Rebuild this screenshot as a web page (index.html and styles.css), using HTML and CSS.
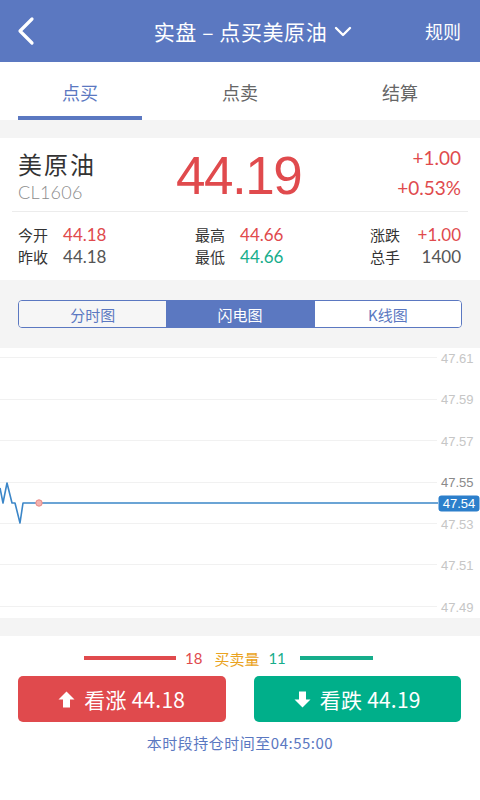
FILE: index.html
```html
<!DOCTYPE html>
<html lang="zh-CN">
<head>
<meta charset="utf-8">
<title>实盘 – 点买美原油</title>
<link rel="stylesheet" href="styles.css">
</head>
<body>
<div class="page">
  <header class="header">
    <svg class="back" width="20" height="30" viewBox="0 0 20 30"><polyline points="15,3 3,15 15,27" fill="none" stroke="#fff" stroke-width="3.2" stroke-linecap="round" stroke-linejoin="round"/></svg>
    <div class="title">实盘 – 点买美原油
      <svg class="caret" width="18" height="12" viewBox="0 0 18 12"><polyline points="2,3 9,10 16,3" fill="none" stroke="#fff" stroke-width="2.4" stroke-linecap="round" stroke-linejoin="round"/></svg>
    </div>
    <div class="rule">规则</div>
  </header>

  <nav class="tabs">
    <div class="tab active">点买</div>
    <div class="tab">点卖</div>
    <div class="tab">结算</div>
  </nav>

  <div class="gap"></div>

  <section class="quote">
    <div class="quote-top">
      <div class="name">
        <div class="cn">美原油</div>
        <div class="code">CL1606</div>
      </div>
      <div class="price">44.19</div>
      <div class="change">
        <div>+1.00</div>
        <div>+0.53%</div>
      </div>
    </div>
    <div class="stats">
      <div class="col">
        <div class="row"><span class="lbl">今开</span><span class="val red">44.18</span></div>
        <div class="row"><span class="lbl">昨收</span><span class="val">44.18</span></div>
      </div>
      <div class="col">
        <div class="row"><span class="lbl">最高</span><span class="val red">44.66</span></div>
        <div class="row"><span class="lbl">最低</span><span class="val green">44.66</span></div>
      </div>
      <div class="col col3">
        <div class="row"><span class="lbl">涨跌</span><span class="val red">+1.00</span></div>
        <div class="row"><span class="lbl">总手</span><span class="val">1400</span></div>
      </div>
    </div>
  </section>

  <div class="seg-wrap">
    <div class="seg">
      <div class="seg-item left">分时图</div>
      <div class="seg-item on">闪电图</div>
      <div class="seg-item right">K线图</div>
    </div>
  </div>

  <section class="chart">
    <svg width="480" height="270" viewBox="0 0 480 270">
      <g stroke="#f1f1f1" stroke-width="1">
        <line x1="0" y1="9.5" x2="437" y2="9.5"/>
        <line x1="0" y1="51.5" x2="437" y2="51.5"/>
        <line x1="0" y1="92.5" x2="437" y2="92.5"/>
        <line x1="0" y1="134.5" x2="437" y2="134.5"/>
        <line x1="0" y1="175.5" x2="437" y2="175.5"/>
        <line x1="0" y1="216.5" x2="437" y2="216.5"/>
        <line x1="0" y1="258.5" x2="437" y2="258.5"/>
      </g>
      <g class="axis" font-family="Liberation Sans, Arial, sans-serif" font-size="13" fill="#c6c6c6">
        <text x="441" y="15">47.61</text>
        <text x="441" y="56">47.59</text>
        <text x="441" y="98">47.57</text>
        <text x="441" y="139" fill="#8a8a8a">47.55</text>
        <text x="441" y="181">47.53</text>
        <text x="441" y="222">47.51</text>
        <text x="441" y="264">47.49</text>
      </g>
      <polyline points="0,140 3,155 7,135 12,155 15,155 20,175 23,155 438,155" fill="none" stroke="#3b86c8" stroke-width="1.6" stroke-linejoin="round"/>
      <circle cx="39" cy="155" r="3.2" fill="#f3b3b0" stroke="#e98a86" stroke-width="1"/>
      <rect x="438.5" y="147.5" width="41" height="16" rx="3" fill="#2c7fcb"/>
      <text x="459" y="160" text-anchor="middle" font-family="Liberation Sans, Arial, sans-serif" font-size="13" fill="#fff">47.54</text>
    </svg>
  </section>

  <div class="gap"></div>

  <section class="bottom">
    <div class="volume">
      <span class="bar red-bar"></span>
      <span class="vnum red">18</span>
      <span class="vlbl">买卖量</span>
      <span class="vnum green">11</span>
      <span class="bar green-bar"></span>
    </div>
    <div class="actions">
      <button class="btn up">
        <svg width="17" height="17" viewBox="0 0 17 17"><polygon points="8.5,0.5 16.5,8.5 12,8.5 12,16.5 5,16.5 5,8.5 0.5,8.5" fill="#fff"/></svg>
        <span>看涨 44.18</span>
      </button>
      <button class="btn down">
        <svg width="17" height="17" viewBox="0 0 17 17"><polygon points="5,0.5 12,0.5 12,8.5 16.5,8.5 8.5,16.5 0.5,8.5 5,8.5" fill="#fff"/></svg>
        <span>看跌 44.19</span>
      </button>
    </div>
    <div class="note">本时段持仓时间至04:55:00</div>
  </section>
</div>
</body>
</html>
```

FILE: styles.css
```css
* { box-sizing: border-box; }

html, body {
  margin: 0;
  padding: 0;
  background: #fff;
}

body {
  font-family: "Noto Sans CJK SC", "Noto Sans", sans-serif;
  color: #333;
  width: 480px;
  height: 800px;
  overflow: hidden;
}

.page {
  width: 480px;
  display: flex;
  flex-direction: column;
}

/* header */
.header {
  height: 62px;
  background: #5b78c1;
  display: flex;
  align-items: center;
  padding: 0 19px 0 17px;
  color: #fff;
}

.back { flex: none; }

.title {
  flex: 1;
  display: flex;
  align-items: center;
  justify-content: center;
  gap: 7px;
  font-size: 21px;
  padding-left: 74px;
  letter-spacing: 0.6px;
}

.rule {
  font-size: 18px;
  margin-left: 30px;
}

/* tabs */
.tabs {
  height: 58px;
  display: grid;
  grid-template-columns: repeat(3, 1fr);
}

.tab {
  display: flex;
  align-items: center;
  justify-content: center;
  font-size: 18px;
  color: #666;
  padding-top: 2px;
}

.tab.active {
  color: #5b78c1;
  box-shadow: inset 0 -4px 0 #5b78c1;
  margin: 0 18px;
}

.gap {
  height: 18px;
  background: #f4f4f4;
}

/* quote */
.quote {
  background: #fff;
  padding: 0 12px;
}

.quote-top {
  height: 74px;
  display: flex;
  align-items: center;
  border-bottom: 1px solid #ececec;
  padding: 0 7px 0 6px;
}

.name { width: 158px; }

.name .cn {
  font-size: 24px;
  line-height: 35px;
  letter-spacing: 2px;
  color: #333;
}

.name .code {
  font-family: "Lato", "Noto Sans", sans-serif;
  font-weight: 300;
  font-size: 18px;
  line-height: 22px;
  color: #8c8c8c;
  letter-spacing: 0.3px;
}

.price {
  font-family: "Liberation Sans", Arial, sans-serif;
  font-size: 53px;
  color: #e04a4d;
  letter-spacing: -1.5px;
  line-height: 1;
  padding-top: 2px;
}

.change {
  flex: 1;
  text-align: right;
  font-family: "Lato", "Noto Sans", sans-serif;
  font-size: 19px;
  line-height: 30px;
  color: #e04a4d;
  margin-top: -4px;
}

.stats {
  height: 68px;
  display: grid;
  grid-template-columns: 177px 175px 1fr;
  align-content: center;
  padding: 0 7px 0 6px;
}

.row {
  display: flex;
  align-items: center;
  gap: 15px;
  height: 22px;
}

.col3 .row { justify-content: space-between; }

.lbl {
  color: #333;
  font-size: 15px;
  line-height: 22px;
}

.val {
  font-family: "Lato", "Noto Sans", sans-serif;
  font-size: 17px;
  line-height: 22px;
  color: #555;
}

.red { color: #e04a4d; }
.green { color: #16ad8b; }

/* segmented */
.seg-wrap {
  height: 68px;
  background: #f4f4f4;
  padding: 20px 18px 0;
}

.seg {
  height: 28px;
  display: grid;
  grid-template-columns: repeat(3, 1fr);
  border: 1.5px solid #5b78c1;
  border-radius: 4px;
  overflow: hidden;
}

.seg-item {
  display: flex;
  align-items: center;
  justify-content: center;
  font-size: 15px;
  color: #5b78c1;
}

.seg-item.left { background: #f6f6f6; }
.seg-item.right { background: #fff; border-left: 1.5px solid #5b78c1; }
.seg-item.on { background: #5b78c1; color: #fff; }

/* chart */
.chart {
  height: 270px;
  background: #fff;
}

.chart svg { display: block; }

/* bottom */
.bottom {
  background: #fff;
  padding-top: 13px;
}

.volume {
  display: flex;
  align-items: center;
  height: 18px;
  padding-left: 84px;
  font-family: "Lato", "Noto Sans", sans-serif;
  font-size: 15px;
}

.bar {
  height: 4px;
  display: block;
}

.red-bar { width: 92px; background: #e04a4d; margin-right: 9px; }
.green-bar { width: 73px; background: #16ad8b; margin-left: 14px; }

.vnum { display: block; }
.vlbl {
  font-family: "Noto Sans CJK SC", sans-serif;
  color: #eaa321;
  margin: 0 9px 0 12px;
}

.actions {
  display: grid;
  grid-template-columns: 1fr 1fr;
  gap: 28px;
  padding: 0 19px 0 18px;
  margin-top: 9px;
}

.btn {
  height: 46px;
  border: 0;
  border-radius: 5px;
  color: #fff;
  display: flex;
  align-items: center;
  justify-content: center;
  gap: 9px;
  font-family: "Noto Sans CJK SC", sans-serif;
  font-size: 21px;
  padding: 0;
}

.btn span { letter-spacing: 0.2px; }

.btn.up { background: #e04a4d; }
.btn.down { background: #00af8a; }

.note {
  text-align: center;
  font-size: 15px;
  letter-spacing: 0.5px;
  color: #5b78c1;
  margin-top: 10px;
}
```
